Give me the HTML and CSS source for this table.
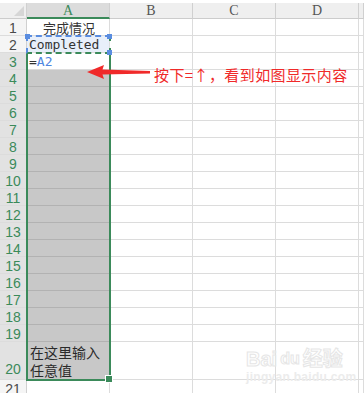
FILE: index.html
```html
<!DOCTYPE html>
<html lang="zh">
<head>
<meta charset="utf-8">
<title>Sheet</title>
<link rel="stylesheet" href="styles.css">
</head>
<body>
<div class="sheet">
  <div class="grid">
    <div class="h corner"><span class="tri"></span></div>
    <div class="h col on">A</div><div class="h col">B</div><div class="h col">C</div><div class="h col">D</div><div class="h col"></div>

    <div class="rh">1</div><div class="c mid">完成情况</div><div class="c"></div><div class="c"></div><div class="c"></div><div class="c"></div>
    <div class="rh">2</div><div class="c mono ref">Completed</div><div class="c"></div><div class="c"></div><div class="c"></div><div class="c"></div>
    <div class="rh s">3</div><div class="c mono act">=<span class="blue">A2</span></div><div class="c"></div><div class="c"></div><div class="c"></div><div class="c"></div>
    <div class="rh s">4</div><div class="c g"></div><div class="c"></div><div class="c"></div><div class="c"></div><div class="c"></div>
    <div class="rh s">5</div><div class="c g"></div><div class="c"></div><div class="c"></div><div class="c"></div><div class="c"></div>
    <div class="rh s">6</div><div class="c g"></div><div class="c"></div><div class="c"></div><div class="c"></div><div class="c"></div>
    <div class="rh s">7</div><div class="c g"></div><div class="c"></div><div class="c"></div><div class="c"></div><div class="c"></div>
    <div class="rh s">8</div><div class="c g"></div><div class="c"></div><div class="c"></div><div class="c"></div><div class="c"></div>
    <div class="rh s">9</div><div class="c g"></div><div class="c"></div><div class="c"></div><div class="c"></div><div class="c"></div>
    <div class="rh s">10</div><div class="c g"></div><div class="c"></div><div class="c"></div><div class="c"></div><div class="c"></div>
    <div class="rh s">11</div><div class="c g"></div><div class="c"></div><div class="c"></div><div class="c"></div><div class="c"></div>
    <div class="rh s">12</div><div class="c g"></div><div class="c"></div><div class="c"></div><div class="c"></div><div class="c"></div>
    <div class="rh s">13</div><div class="c g"></div><div class="c"></div><div class="c"></div><div class="c"></div><div class="c"></div>
    <div class="rh s">14</div><div class="c g"></div><div class="c"></div><div class="c"></div><div class="c"></div><div class="c"></div>
    <div class="rh s">15</div><div class="c g"></div><div class="c"></div><div class="c"></div><div class="c"></div><div class="c"></div>
    <div class="rh s">16</div><div class="c g"></div><div class="c"></div><div class="c"></div><div class="c"></div><div class="c"></div>
    <div class="rh s">17</div><div class="c g"></div><div class="c"></div><div class="c"></div><div class="c"></div><div class="c"></div>
    <div class="rh s">18</div><div class="c g"></div><div class="c"></div><div class="c"></div><div class="c"></div><div class="c"></div>
    <div class="rh s">19</div><div class="c g"></div><div class="c"></div><div class="c"></div><div class="c"></div><div class="c"></div>
    <div class="rh s tall">20</div><div class="c g txt">在这里输入<br>任意值</div><div class="c"></div><div class="c"></div><div class="c"></div><div class="c"></div>
    <div class="rh">21</div><div class="c"></div><div class="c"></div><div class="c"></div><div class="c"></div><div class="c"></div>
  </div>

  <div class="selbox"><span class="handle"></span></div>
  <div class="refbox"><span class="sq tl"></span><span class="sq tr"></span><span class="sq br"></span></div>

  <div class="note">
    <svg class="arrow" width="66" height="16" viewBox="0 0 66 16"><polygon points="1,8 18,1 16.5,5.6 64,7 64,9.5 16.5,10.6 18,15" fill="#f02a2a"/></svg>
    <span class="note-text">按下=↑，看到如图显示内容</span>
  </div>

  <div class="mark">
    <div class="mark-top"><span>Bai</span><span class="paw">du</span><span>经验</span></div>
    <div class="mark-url">jingyan.baidu.com</div>
  </div>
</div>
</body>
</html>
```

FILE: styles.css
```css
html, body {
  margin: 0;
  padding: 0;
  background: #ffffff;
}
body {
  font-family: "Liberation Sans", "Noto Sans CJK SC", sans-serif;
}
.sheet {
  position: relative;
  width: 364px;
  height: 393px;
  overflow: hidden;
  padding-top: 3px;
  box-sizing: border-box;
}
.grid {
  display: grid;
  grid-template-columns: 27px repeat(4, 83px) 1fr;
  grid-template-rows: 16px repeat(19, 17px) 38px 17px;
}
.grid > div {
  box-sizing: border-box;
  border-right: 1px solid #dcdcdc;
  border-bottom: 1px solid #dcdcdc;
  overflow: hidden;
  white-space: nowrap;
}
.h {
  background: #efefef;
  border-right-color: #d0d0d0 !important;
  border-bottom-color: #cccccc !important;
  color: #555555;
  font-family: "Liberation Serif", "DejaVu Serif", serif;
  font-size: 14px;
  line-height: 16px;
  text-align: center;
}
.corner {
  position: relative;
}
.tri {
  position: absolute;
  right: 2px;
  bottom: 2px;
  width: 0;
  height: 0;
  border-left: 10px solid transparent;
  border-bottom: 10px solid #d6d6d6;
}
.col.on {
  background: #dcdcdc;
  color: #3b8a5a;
  border-bottom: 2px solid #3b8a5a !important;
}
.rh {
  background: #f5f5f5;
  border-right-color: #d0d0d0 !important;
  color: #4a4a4a;
  font-size: 14px;
  line-height: 17px;
  text-align: center;
  padding-top: 1px;
}
.rh.s {
  background: #e2e2e2;
  color: #3b8a5a;
}
.rh.tall {
  display: flex;
  align-items: flex-end;
  justify-content: center;
  padding-bottom: 1px;
}
.c {
  font-size: 13px;
  line-height: 16px;
  color: #333333;
  padding-left: 2px;
}
.mid {
  text-align: center;
  font-family: "Noto Sans CJK SC", sans-serif;
  font-size: 13px;
  line-height: 17px;
  color: #333333;
}
.mono {
  font-family: "DejaVu Sans Mono", "Liberation Mono", monospace;
  font-size: 13px;
  line-height: 17px;
}
.ref {
  background: #e8effa;
}
.act {
  background: #ffffff;
}
.blue {
  color: #4f86e0;
}
.c.g {
  background: #c8c8c8;
  border-bottom-color: #b2b2b2;
}
.txt {
  display: flex;
  align-items: flex-end;
  white-space: normal;
  font-family: "Noto Sans CJK SC", sans-serif;
  font-size: 14px;
  line-height: 18px;
  color: #2a2a2a;
  padding-left: 3px;
}

/* selection overlay A3:A20 */
.selbox {
  position: absolute;
  left: 26px;
  top: 52px;
  width: 85px;
  height: 329px;
  box-sizing: border-box;
  border: 2px solid #3b8a5a;
  border-top: none;
  pointer-events: none;
}
.handle {
  position: absolute;
  right: -4px;
  bottom: -4px;
  width: 6px;
  height: 6px;
  background: #3b8a5a;
  border: 1px solid #ffffff;
}

/* reference highlight on A2 */
.refbox {
  position: absolute;
  left: 26px;
  top: 35px;
  width: 85px;
  height: 19px;
  box-sizing: border-box;
  border-top: 2px dashed #5a8de0;
  border-left: 2px dashed #5a8de0;
  border-right: 2px dashed #3b8a5a;
  border-bottom: 2px dashed #3b8a5a;
}
.sq {
  position: absolute;
  width: 5px;
  height: 5px;
  background: #5a8de0;
}
.sq.tl { left: -3px; top: -3px; }
.sq.tr { right: -3px; top: -3px; }
.sq.br { right: -3px; bottom: -3px; }

/* annotation */
.note {
  position: absolute;
  left: 86px;
  top: 60px;
  display: flex;
  align-items: center;
  gap: 2px;
}
.arrow {
  display: block;
}
.note-text {
  font-family: "Noto Sans CJK SC", sans-serif;
  font-size: 15px;
  line-height: 18px;
  color: #f02a2a;
  white-space: nowrap;
  margin-top: 6px;
  letter-spacing: 0.4px;
}

/* watermark */
.mark {
  position: absolute;
  left: 246px;
  top: 348px;
  color: transparent;
  pointer-events: none;
}
.mark-top {
  display: flex;
  align-items: flex-end;
  gap: 3px;
  font-family: "Liberation Sans", "Noto Sans CJK SC", sans-serif;
  font-size: 20px;
  line-height: 22px;
  font-weight: bold;
  -webkit-text-stroke: 1px #e6e6e6;
}
.paw {
  font-size: 16px;
}
.mark-url {
  font-family: "Liberation Sans", sans-serif;
  font-size: 12px;
  line-height: 14px;
  color: #ececec;
  font-weight: bold;
  letter-spacing: 0.3px;
}
```
